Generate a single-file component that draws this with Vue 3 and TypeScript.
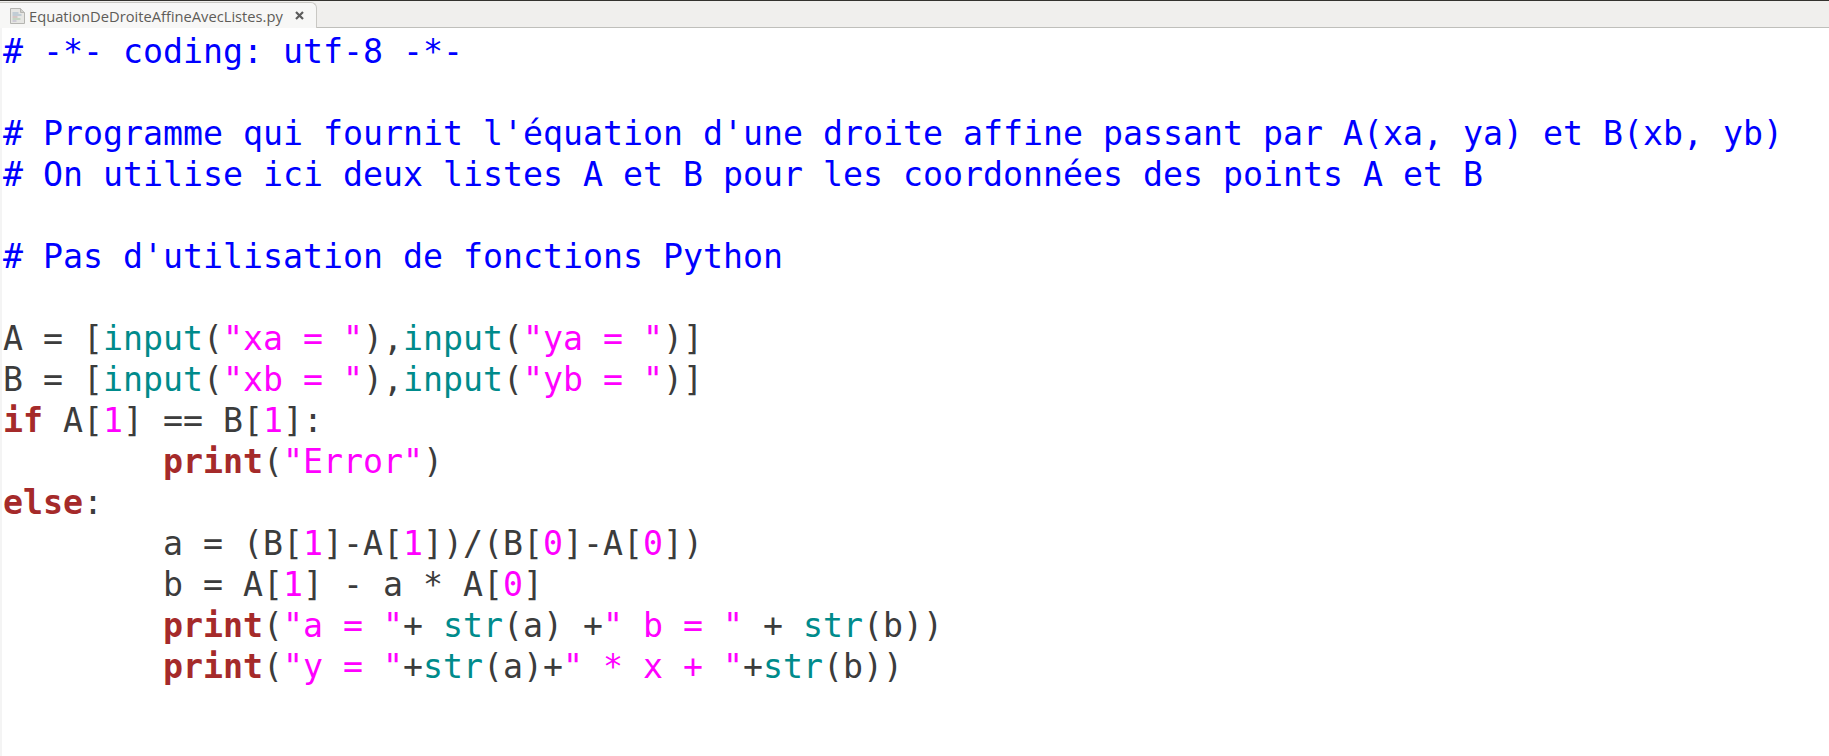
<script setup lang="ts">
type Tok = [string, string];
const c = 'c', p = 'p', k = 'k', s = 's', b = 'b', n = 'n';
const lines: Tok[][] = [
  [[c, '# -*- coding: utf-8 -*-']],
  [],
  [[c, "# Programme qui fournit l'équation d'une droite affine passant par A(xa, ya) et B(xb, yb)"]],
  [[c, '# On utilise ici deux listes A et B pour les coordonnées des points A et B']],
  [],
  [[c, "# Pas d'utilisation de fonctions Python"]],
  [],
  [[p, 'A = ['], [b, 'input'], [p, '('], [s, '"xa = "'], [p, '),'], [b, 'input'], [p, '('], [s, '"ya = "'], [p, ')]']],
  [[p, 'B = ['], [b, 'input'], [p, '('], [s, '"xb = "'], [p, '),'], [b, 'input'], [p, '('], [s, '"yb = "'], [p, ')]']],
  [[k, 'if'], [p, ' A['], [n, '1'], [p, '] == B['], [n, '1'], [p, ']:']],
  [[p, '\t'], [k, 'print'], [p, '('], [s, '"Error"'], [p, ')']],
  [[k, 'else'], [p, ':']],
  [[p, '\ta = (B['], [n, '1'], [p, ']-A['], [n, '1'], [p, '])/(B['], [n, '0'], [p, ']-A['], [n, '0'], [p, '])']],
  [[p, '\tb = A['], [n, '1'], [p, '] - a * A['], [n, '0'], [p, ']']],
  [[p, '\t'], [k, 'print'], [p, '('], [s, '"a = "'], [p, '+ '], [b, 'str'], [p, '(a) +'], [s, '" b = "'], [p, ' + '], [b, 'str'], [p, '(b))']],
  [[p, '\t'], [k, 'print'], [p, '('], [s, '"y = "'], [p, '+'], [b, 'str'], [p, '(a)+'], [s, '" * x + "'], [p, '+'], [b, 'str'], [p, '(b))']],
];
</script>

<template>
  <div class="window">
    <div class="tabbar">
      <div class="tab">
        <svg class="file" width="17" height="18" viewBox="0 0 17 18">
          <path d="M1.5 1.5h10l4 4v11h-14z" fill="#e6e6e3" stroke="#b5b5b1" />
          <path d="M11.5 1.5v4h4" fill="#cfcfcb" stroke="#b5b5b1" />
          <path d="M3.5 6h6M3.5 8h9" stroke="#9db3c6" />
          <path d="M3.5 10h5" stroke="#c4a5a5" />
          <path d="M3.5 12h8" stroke="#a5c4a5" />
          <path d="M3.5 14h4" stroke="#b5b0c8" />
        </svg>
        <span class="title">EquationDeDroiteAffineAvecListes.py</span>
        <svg class="close" width="9" height="9" viewBox="0 0 9 9">
          <path d="M1 1l7 7M8 1l-7 7" stroke="#5c5c5c" stroke-width="2.2" />
        </svg>
      </div>
    </div>
    <div class="code">
      <div v-for="(line, i) in lines" :key="i" class="line"><span v-for="(t, j) in line" :key="j" :class="t[0]">{{ t[1] }}</span></div>
    </div>
  </div>
</template>

<style>
html, body { margin: 0; background: #fff; }
</style>

<style scoped>
.window { width: 1829px; height: 756px; overflow: hidden; background: #fff; display: flex; flex-direction: column; }
.tabbar { height: 28px; flex: none; box-sizing: border-box; background: #f0efed; border-top: 1px solid #33322e; border-bottom: 1px solid #bfbfbb; display: flex; align-items: flex-end; }
.tab { height: 26px; margin-bottom: -1px; box-sizing: border-box; width: 317px; background: #f7f7f6; border: 1px solid #c9c8c4; border-left: none; border-bottom: none; border-radius: 0 6px 0 0; display: flex; align-items: center; padding-left: 9px; }
.file { flex: none; }
.title { margin-left: 3px; font: 14.7px "Open Sans", "Noto Sans", sans-serif; color: #5e5c58; white-space: nowrap; }
.close { margin-left: 12px; flex: none; }
.code { padding-left: 3px; padding-top: 3px; background: linear-gradient(to right, #f4f4f4 2px, #fff 2px); flex: 1; font-family: "DejaVu Sans Mono", monospace; font-size: 33.22px; line-height: 41px; tab-size: 8; white-space: pre; color: #3c3c3c; }
.line { height: 41px; }
.c { color: #0000ff; }
.p { color: #3c3c3c; }
.k { color: #a52a2a; font-weight: 700; }
.s { color: #ff00ff; }
.n { color: #ff00ff; }
.b { color: #008b8b; }
</style>
